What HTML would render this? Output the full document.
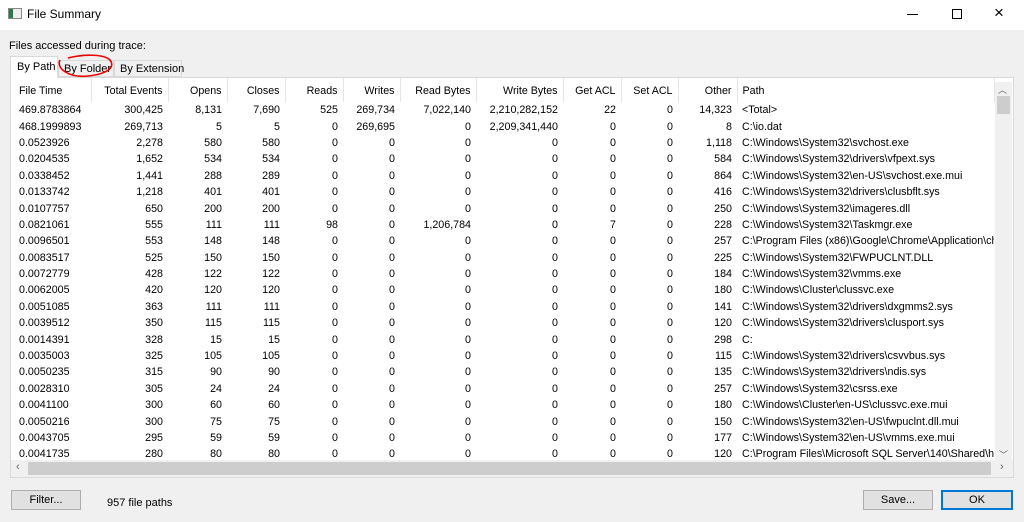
<!DOCTYPE html>
<html><head><meta charset="utf-8"><style>
*{margin:0;padding:0;box-sizing:border-box}
body{width:1024px;height:522px;background:#f0f0f0;font-family:"Liberation Sans",sans-serif;font-size:11px;color:#000;position:relative;overflow:hidden}
.tb{position:absolute;left:0;top:0;width:1024px;height:30px;background:#fff}
.a{position:absolute;white-space:nowrap}
.list{position:absolute;left:10px;top:77px;width:1004px;height:401px;background:#fff;border:1px solid #d9d9d9;overflow:hidden}
table{position:absolute;left:3px;top:0;border-collapse:collapse;table-layout:fixed;width:980px}
td,th{height:16.4px;padding:0 5px;text-align:right;white-space:nowrap;overflow:hidden;font-weight:normal;font-size:10.7px}
th{height:24px;border-right:1px solid #e5e5e5;padding-top:1px}
td.l,th.l{text-align:left}
.btn{position:absolute;height:20px;background:#e1e1e1;border:1px solid #adadad;text-align:center;line-height:18px}
</style></head><body>
<div class="tb"></div>
<div class="a" style="left:8px;top:8px;width:14px;height:11px;border:1px solid #888;background:#eee"><div style="width:4px;height:9px;background:#2a7a4a"></div></div>
<div class="a" style="left:27px;top:7px;font-size:12px">File Summary</div>
<div class="a" style="left:907px;top:14px;width:11px;border-top:1px solid #000"></div>
<div class="a" style="left:952px;top:9px;width:10px;height:10px;border:1px solid #000"></div>
<div class="a" style="left:994px;top:3px;font-size:17px">×</div>
<div class="a" style="left:9px;top:40px">Files accessed during trace:</div>
<div class="a" style="left:10px;top:56px;width:48px;height:22px;background:#fff;border:1px solid #d9d9d9;border-bottom:none;z-index:2;padding:4px 0 0 6px">By Path</div>
<div class="a" style="left:58px;top:60px;width:56px;height:17px;border:1px solid #d9d9d9;padding:2px 0 0 5px">By Folder</div>
<div class="a" style="left:114px;top:60px;width:68px;height:17px;border:1px solid #d9d9d9;padding:2px 0 0 5px">By Extension</div>
<svg class="a" style="left:54px;top:54px;z-index:5" width="64" height="28"><path d="M6 6 C2 14 14 24 34 22 C52 20 62 14 56 6 C50 0 30 0 14 4" fill="none" stroke="#e00" stroke-width="1.6"/></svg>
<div class="list">
<table>
<colgroup><col style="width:77px"><col style="width:77px"><col style="width:59px"><col style="width:58px"><col style="width:58px"><col style="width:57px"><col style="width:76px"><col style="width:87px"><col style="width:58px"><col style="width:57px"><col style="width:59px"><col style="width:257px"></colgroup>
<tr><th class="l">File Time</th><th>Total Events</th><th>Opens</th><th>Closes</th><th>Reads</th><th>Writes</th><th>Read Bytes</th><th>Write Bytes</th><th>Get ACL</th><th>Set ACL</th><th>Other</th><th class="l">Path</th></tr>
<tr><td class="l">469.8783864</td><td>300,425</td><td>8,131</td><td>7,690</td><td>525</td><td>269,734</td><td>7,022,140</td><td>2,210,282,152</td><td>22</td><td>0</td><td>14,323</td><td class="l">&lt;Total&gt;</td></tr>
<tr><td class="l">468.1999893</td><td>269,713</td><td>5</td><td>5</td><td>0</td><td>269,695</td><td>0</td><td>2,209,341,440</td><td>0</td><td>0</td><td>8</td><td class="l">C:\io.dat</td></tr>
<tr><td class="l">0.0523926</td><td>2,278</td><td>580</td><td>580</td><td>0</td><td>0</td><td>0</td><td>0</td><td>0</td><td>0</td><td>1,118</td><td class="l">C:\Windows\System32\svchost.exe</td></tr>
<tr><td class="l">0.0204535</td><td>1,652</td><td>534</td><td>534</td><td>0</td><td>0</td><td>0</td><td>0</td><td>0</td><td>0</td><td>584</td><td class="l">C:\Windows\System32\drivers\vfpext.sys</td></tr>
<tr><td class="l">0.0338452</td><td>1,441</td><td>288</td><td>289</td><td>0</td><td>0</td><td>0</td><td>0</td><td>0</td><td>0</td><td>864</td><td class="l">C:\Windows\System32\en-US\svchost.exe.mui</td></tr>
<tr><td class="l">0.0133742</td><td>1,218</td><td>401</td><td>401</td><td>0</td><td>0</td><td>0</td><td>0</td><td>0</td><td>0</td><td>416</td><td class="l">C:\Windows\System32\drivers\clusbflt.sys</td></tr>
<tr><td class="l">0.0107757</td><td>650</td><td>200</td><td>200</td><td>0</td><td>0</td><td>0</td><td>0</td><td>0</td><td>0</td><td>250</td><td class="l">C:\Windows\System32\imageres.dll</td></tr>
<tr><td class="l">0.0821061</td><td>555</td><td>111</td><td>111</td><td>98</td><td>0</td><td>1,206,784</td><td>0</td><td>7</td><td>0</td><td>228</td><td class="l">C:\Windows\System32\Taskmgr.exe</td></tr>
<tr><td class="l">0.0096501</td><td>553</td><td>148</td><td>148</td><td>0</td><td>0</td><td>0</td><td>0</td><td>0</td><td>0</td><td>257</td><td class="l">C:\Program Files (x86)\Google\Chrome\Application\chrome.exe</td></tr>
<tr><td class="l">0.0083517</td><td>525</td><td>150</td><td>150</td><td>0</td><td>0</td><td>0</td><td>0</td><td>0</td><td>0</td><td>225</td><td class="l">C:\Windows\System32\FWPUCLNT.DLL</td></tr>
<tr><td class="l">0.0072779</td><td>428</td><td>122</td><td>122</td><td>0</td><td>0</td><td>0</td><td>0</td><td>0</td><td>0</td><td>184</td><td class="l">C:\Windows\System32\vmms.exe</td></tr>
<tr><td class="l">0.0062005</td><td>420</td><td>120</td><td>120</td><td>0</td><td>0</td><td>0</td><td>0</td><td>0</td><td>0</td><td>180</td><td class="l">C:\Windows\Cluster\clussvc.exe</td></tr>
<tr><td class="l">0.0051085</td><td>363</td><td>111</td><td>111</td><td>0</td><td>0</td><td>0</td><td>0</td><td>0</td><td>0</td><td>141</td><td class="l">C:\Windows\System32\drivers\dxgmms2.sys</td></tr>
<tr><td class="l">0.0039512</td><td>350</td><td>115</td><td>115</td><td>0</td><td>0</td><td>0</td><td>0</td><td>0</td><td>0</td><td>120</td><td class="l">C:\Windows\System32\drivers\clusport.sys</td></tr>
<tr><td class="l">0.0014391</td><td>328</td><td>15</td><td>15</td><td>0</td><td>0</td><td>0</td><td>0</td><td>0</td><td>0</td><td>298</td><td class="l">C:</td></tr>
<tr><td class="l">0.0035003</td><td>325</td><td>105</td><td>105</td><td>0</td><td>0</td><td>0</td><td>0</td><td>0</td><td>0</td><td>115</td><td class="l">C:\Windows\System32\drivers\csvvbus.sys</td></tr>
<tr><td class="l">0.0050235</td><td>315</td><td>90</td><td>90</td><td>0</td><td>0</td><td>0</td><td>0</td><td>0</td><td>0</td><td>135</td><td class="l">C:\Windows\System32\drivers\ndis.sys</td></tr>
<tr><td class="l">0.0028310</td><td>305</td><td>24</td><td>24</td><td>0</td><td>0</td><td>0</td><td>0</td><td>0</td><td>0</td><td>257</td><td class="l">C:\Windows\System32\csrss.exe</td></tr>
<tr><td class="l">0.0041100</td><td>300</td><td>60</td><td>60</td><td>0</td><td>0</td><td>0</td><td>0</td><td>0</td><td>0</td><td>180</td><td class="l">C:\Windows\Cluster\en-US\clussvc.exe.mui</td></tr>
<tr><td class="l">0.0050216</td><td>300</td><td>75</td><td>75</td><td>0</td><td>0</td><td>0</td><td>0</td><td>0</td><td>0</td><td>150</td><td class="l">C:\Windows\System32\en-US\fwpuclnt.dll.mui</td></tr>
<tr><td class="l">0.0043705</td><td>295</td><td>59</td><td>59</td><td>0</td><td>0</td><td>0</td><td>0</td><td>0</td><td>0</td><td>177</td><td class="l">C:\Windows\System32\en-US\vmms.exe.mui</td></tr>
<tr><td class="l">0.0041735</td><td>280</td><td>80</td><td>80</td><td>0</td><td>0</td><td>0</td><td>0</td><td>0</td><td>0</td><td>120</td><td class="l">C:\Program Files\Microsoft SQL Server\140\Shared\hkengine.dll</td></tr>
</table>
<div class="a" style="left:984px;top:4px;width:17px;height:379px;background:#f0f0f0"></div>
<div class="a" style="left:987px;top:5px;font-size:9px;color:#606060">︿</div>
<div class="a" style="left:986px;top:18px;width:13px;height:18px;background:#cdcdcd"></div>
<div class="a" style="left:988px;top:370px;font-size:9px;color:#606060">﹀</div>
<div class="a" style="left:0;top:382px;width:1002px;height:17px;background:#f0f0f0"></div>
<div class="a" style="left:17px;top:384px;width:963px;height:13px;background:#cdcdcd"></div>
<div class="a" style="left:5px;top:383px;font-size:11px;color:#606060">‹</div>
<div class="a" style="left:989px;top:383px;font-size:11px;color:#606060">›</div>
</div>
<div class="btn" style="left:11px;top:490px;width:70px">Filter...</div>
<div class="a" style="left:107px;top:497px">957 file paths</div>
<div class="btn" style="left:863px;top:490px;width:70px">Save...</div>
<div class="btn" style="left:941px;top:490px;width:72px;border:2px solid #0078d7;line-height:16px">OK</div>
</body></html>
